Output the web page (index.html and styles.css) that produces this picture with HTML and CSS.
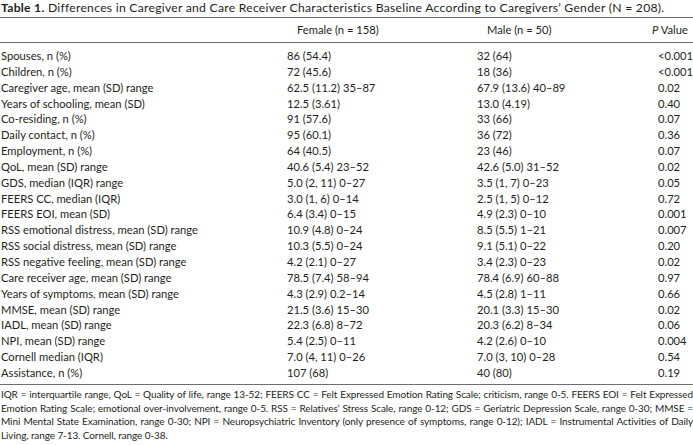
FILE: index.html
```html
<!DOCTYPE html>
<html lang="en">
<head>
<meta charset="utf-8">
<title>Table 1</title>
<link rel="stylesheet" href="styles.css">
</head>
<body>
<div class="page">
  <p class="caption"><span class="caption-label">Table 1.</span> Differences in Caregiver and Care Receiver Characteristics Baseline According to Caregivers’ Gender (N = 208).</p>
  <table class="data">
    <colgroup>
      <col class="c-label">
      <col class="c-female">
      <col class="c-male">
      <col class="c-p">
    </colgroup>
    <thead>
      <tr>
        <th class="h-label"></th>
        <th class="h-female">Female (n = 158)</th>
        <th class="h-male">Male (n = 50)</th>
        <th class="h-p"><i>P</i> Value</th>
      </tr>
    </thead>
    <tbody>
      <tr><td>Spouses, n (%)</td><td>86 (54.4)</td><td>32 (64)</td><td>&lt;0.001</td></tr>
      <tr><td>Children, n (%)</td><td>72 (45.6)</td><td>18 (36)</td><td>&lt;0.001</td></tr>
      <tr><td>Caregiver age, mean (SD) range</td><td>62.5 (11.2) 35–87</td><td>67.9 (13.6) 40–89</td><td>0.02</td></tr>
      <tr><td>Years of schooling, mean (SD)</td><td>12.5 (3.61)</td><td>13.0 (4.19)</td><td>0.40</td></tr>
      <tr><td>Co-residing, n (%)</td><td>91 (57.6)</td><td>33 (66)</td><td>0.07</td></tr>
      <tr><td>Daily contact, n (%)</td><td>95 (60.1)</td><td>36 (72)</td><td>0.36</td></tr>
      <tr><td>Employment, n (%)</td><td>64 (40.5)</td><td>23 (46)</td><td>0.07</td></tr>
      <tr><td>QoL, mean (SD) range</td><td>40.6 (5.4) 23–52</td><td>42.6 (5.0) 31–52</td><td>0.02</td></tr>
      <tr><td>GDS, median (IQR) range</td><td>5.0 (2, 11) 0–27</td><td>3.5 (1, 7) 0–23</td><td>0.05</td></tr>
      <tr><td>FEERS CC, median (IQR)</td><td>3.0 (1, 6) 0–14</td><td>2.5 (1, 5) 0–12</td><td>0.72</td></tr>
      <tr><td>FEERS EOI, mean (SD)</td><td>6.4 (3.4) 0–15</td><td>4.9 (2.3) 0–10</td><td>0.001</td></tr>
      <tr><td>RSS emotional distress, mean (SD) range</td><td>10.9 (4.8) 0–24</td><td>8.5 (5.5) 1–21</td><td>0.007</td></tr>
      <tr><td>RSS social distress, mean (SD) range</td><td>10.3 (5.5) 0–24</td><td>9.1 (5.1) 0–22</td><td>0.20</td></tr>
      <tr><td>RSS negative feeling, mean (SD) range</td><td>4.2 (2.1) 0–27</td><td>3.4 (2.3) 0–23</td><td>0.02</td></tr>
      <tr><td>Care receiver age, mean (SD) range</td><td>78.5 (7.4) 58–94</td><td>78.4 (6.9) 60–88</td><td>0.97</td></tr>
      <tr><td>Years of symptoms, mean (SD) range</td><td>4.3 (2.9) 0.2–14</td><td>4.5 (2.8) 1–11</td><td>0.66</td></tr>
      <tr><td>MMSE, mean (SD) range</td><td>21.5 (3.6) 15–30</td><td>20.1 (3.3) 15–30</td><td>0.02</td></tr>
      <tr><td>IADL, mean (SD) range</td><td>22.3 (6.8) 8–72</td><td>20.3 (6.2) 8–34</td><td>0.06</td></tr>
      <tr><td>NPI, mean (SD) range</td><td>5.4 (2.5) 0–11</td><td>4.2 (2.6) 0–10</td><td>0.004</td></tr>
      <tr><td>Cornell median (IQR)</td><td>7.0 (4, 11) 0–26</td><td>7.0 (3, 10) 0–28</td><td>0.54</td></tr>
      <tr><td>Assistance, n (%)</td><td>107 (68)</td><td>40 (80)</td><td>0.19</td></tr>
    </tbody>
  </table>
  <p class="footnote">IQR = interquartile range, QoL = Quality of life, range 13-52; FEERS CC = Felt Expressed Emotion Rating Scale; criticism, range 0-5. FEERS EOI = Felt Expressed Emotion Rating Scale; emotional over-involvement, range 0-5. RSS = Relatives’ Stress Scale, range 0-12; GDS = Geriatric Depression Scale, range 0-30; MMSE = Mini Mental State Examination, range 0-30; NPI = Neuropsychiatric Inventory (only presence of symptoms, range 0-12); IADL = Instrumental Activities of Daily Living, range 7-13. Cornell, range 0-38.</p>
</div>
</body>
</html>
```

FILE: styles.css
```css
html, body {
  margin: 0;
  padding: 0;
  background: #ffffff;
}

.page {
  width: 693px;
  font-family: "Lato", "Open Sans", sans-serif;
  color: #231f20;
  font-size: 11.2px;
}

.caption {
  margin: 0;
  padding: 1px 0 0 1px;
  line-height: 14px;
  font-size: 12.2px;
  letter-spacing: 0.25px;
  height: 16px;
  white-space: nowrap;
}

.caption-label {
  font-weight: bold;
}

.data {
  width: 693px;
  border-collapse: collapse;
  table-layout: fixed;
}

.c-label { width: 287px; }
.c-female { width: 190px; }
.c-male { width: 181px; }
.c-p { width: 35px; }

.data thead th {
  font-weight: normal;
  text-align: left;
  height: 24px;
  padding: 0;
  border-top: 1px solid #6d6e71;
  border-bottom: 1px solid #6d6e71;
  vertical-align: middle;
  line-height: 14px;
  white-space: nowrap;
}

.data thead th.h-female { padding-left: 10px; }
.data thead th.h-male { padding-left: 10px; }
.data thead th.h-p { padding-left: 0; text-indent: -6px; }

.data tbody td {
  padding: 0;
  line-height: 15.85px;
  height: 15.85px;
  white-space: nowrap;
  vertical-align: middle;
}

.data tbody td:first-child { padding-left: 1px; }

.data tbody tr:first-child td { padding-top: 5px; }
.data tbody tr:last-child td {
  padding-bottom: 3px;
  border-bottom: 1px solid #6d6e71;
}

.footnote {
  margin: 0;
  padding: 3px 0 0 1px;
  font-size: 10px;
  line-height: 13.8px;
  text-align: justify;
  letter-spacing: -0.1px;
}
```
